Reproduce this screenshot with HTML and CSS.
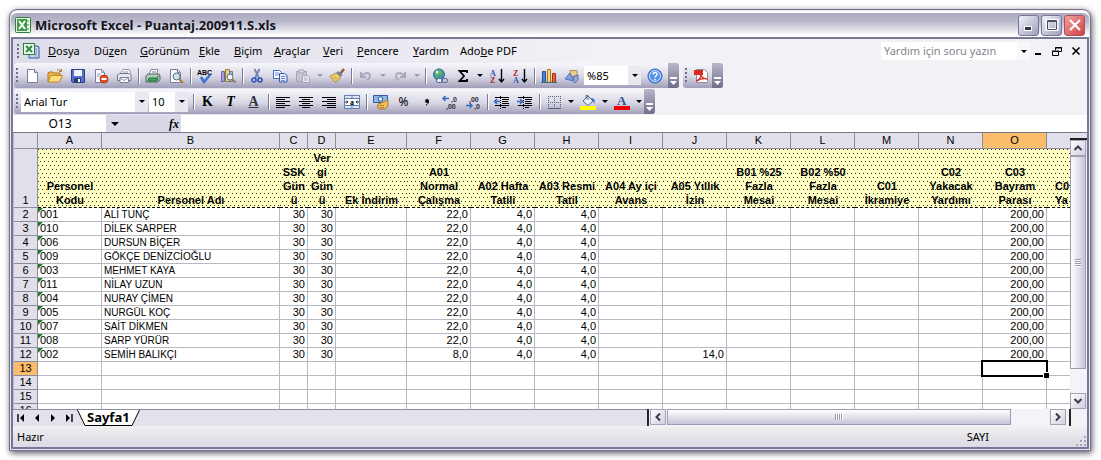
FILE: index.html
```html
<!DOCTYPE html>
<html lang="tr">
<head>
<meta charset="utf-8">
<title>Microsoft Excel - Puantaj.200911.S.xls</title>
<link rel="stylesheet" href="styles.css">
</head>
<body>
<main class="window">
  <header class="titlebar">
    <svg class="app-icon" viewBox="0 0 16 16"><rect x=".5" y=".5" width="15" height="15" rx="1" fill="#e8f3e4" stroke="#2f7d3a"/><rect x="2" y="2" width="10" height="12" fill="#3d9a48"/><path d="M4 4l6 8M10 4l-6 8" stroke="#fff" stroke-width="2"/><path d="M13 3v2M13 7v2M13 11v2" stroke="#3d9a48"/></svg>
    <h1>Microsoft Excel - Puantaj.200911.S.xls</h1>
    <div class="win-buttons">
      <button class="win-btn" aria-label="Simge durumuna küçült"><svg viewBox="0 0 16 16"><path d="M3 11.500h8" stroke="#fff" stroke-width="5"/><path d="M4 11.500h6" stroke="#333652" stroke-width="3"/></svg></button>
      <button class="win-btn" aria-label="Ekranı kapla"><svg viewBox="0 0 16 16"><path d="M3 3.500h10v9H3z" fill="none" stroke="#fff" stroke-width="3"/><path d="M3.500 3.500h9v9h-9zM3 4.500h10" fill="none" stroke="#4b4c68"/></svg></button>
      <button class="win-btn close" aria-label="Kapat"><svg viewBox="0 0 16 16"><path d="M3 3l10 10M13 3L3 13" stroke="#fff" stroke-width="2.200"/></svg></button>
    </div>
  </header>

  <div class="client">
    <nav class="menubar">
      <span class="grip"></span>
      <svg class="book-icon" viewBox="0 0 18 18"><path d="M7 4h9l1 1v11H7z" fill="#c5d5f2" stroke="#33569e"/><path d="M14 6v9" stroke="#7894cc"/><rect x="1.500" y="1.500" width="11" height="11" fill="#eef7eb" stroke="#2f7d3a"/><path d="M4 4l6 6M10 4l-6 6" stroke="#2f8a3d" stroke-width="2"/></svg>
      <div class="menus">
        <button><u>D</u>osya</button><button>Dü<u>z</u>en</button><button><u>G</u>örünüm</button><button><u>E</u>kle</button><button><u>B</u>içim</button><button><u>A</u>raçlar</button><button><u>V</u>eri</button><button><u>P</u>encere</button><button><u>Y</u>ardım</button><button>Ado<u>b</u>e PDF</button>
      </div>
      <div class="combo help-box"><input type="text" placeholder="Yardım için soru yazın" aria-label="Yardım için soru yazın"><i class="arrow"></i></div>
      <div class="doc-buttons">
        <button aria-label="Pencereyi küçült"><svg viewBox="0 0 10 10"><path d="M2 8h6" stroke="#000" stroke-width="2"/></svg></button>
        <button aria-label="Pencereyi geri yükle"><svg viewBox="0 0 10 10"><path d="M3.500 4V1.500h6v4H7M3 2h7M.5 5.500h6v4h-6zM0 5h7" fill="none" stroke="#000"/></svg></button>
        <button aria-label="Pencereyi kapat"><svg viewBox="0 0 10 10"><path d="M1.500 1.500l7 7M8.500 1.500l-7 7" stroke="#000" stroke-width="1.600"/></svg></button>
      </div>
    </nav>

    <div class="toolrow">
      <div class="toolbar">
        <span class="grip"></span>
        <button class="tool" aria-label="Yeni"><svg viewBox="0 0 16 16"><path d="M3.500 1.500h7l3 3v10h-10z" fill="#fff" stroke="#76809c"/><path d="M10.500 1.500v3h3" fill="#cbd6ee" stroke="#76809c"/></svg></button>
        <button class="tool" aria-label="Aç"><svg viewBox="0 0 16 16"><path d="M1 14V5l1-1h4l1 1h6v3" fill="#e8b44a" stroke="#b1741d"/><path d="M1 14l3-6.500h11.500L12.500 14z" fill="#ffdf7d" stroke="#c28627"/><path d="M10 3c1-2 3-2 4 0M14.500 1v2.500H12" fill="none" stroke="#b1741d"/></svg></button>
        <button class="tool" aria-label="Kaydet"><svg viewBox="0 0 16 16"><path d="M1.500 1.500h13v13h-12l-1-1z" fill="#5570c8" stroke="#2d3f8c"/><path d="M4 2h8v6H4z" fill="#f1f4fc"/><path d="M4 10h7v4H4z" fill="#2c3b7d"/><path d="M8 11h2v3H8z" fill="#fff"/></svg></button>
        <button class="tool" aria-label="İzin"><svg viewBox="0 0 16 16"><path d="M2.500 1.500h6l3 3v10h-9z" fill="#fff" stroke="#76809c"/><path d="M8.500 1.500v3h3M4 6h4M4 8h3" fill="none" stroke="#8d9bc0"/><circle cx="11" cy="11" r="4" fill="#e4502c" stroke="#b52f16"/><path d="M8.500 11h5" stroke="#fff" stroke-width="2"/></svg></button>
        <button class="tool" aria-label="E-posta"><svg viewBox="0 0 16 16"><path d="M4 6l3-4.500h6l2 4" fill="#fff" stroke="#8b93a8"/><path d="M1.500 7l2-1.500h10L15 7v5.500H1.500z" fill="#e8e9f0" stroke="#6e7488"/><path d="M4 9.500h8.500v5H4z" fill="#fff" stroke="#7b8195"/><path d="M4 10l4 2.500 4-2.500M7 4h5" fill="none" stroke="#8b93a8"/></svg></button>
        <span class="sep"></span>
        <button class="tool" aria-label="Yazdır"><svg viewBox="0 0 16 16"><path d="M4 7l2-5.500h7L11.500 7" fill="#fff" stroke="#7a869b"/><path d="M1 8l2-2h11l1 2v4l-2 2H1z" fill="#b6c7bd" stroke="#52665e"/><path d="M3 13l1-3h9l-1 3z" fill="#3fa557" stroke="#23743a"/><path d="M7 4h4M12 8.500h2" stroke="#657386"/></svg></button>
        <button class="tool" aria-label="Baskı önizleme"><svg viewBox="0 0 16 16"><path d="M2.500 1.500h7l3 3v10h-10z" fill="#fff" stroke="#76809c"/><path d="M9.500 1.500v3h3" fill="none" stroke="#76809c"/><circle cx="8.500" cy="8.500" r="3.500" fill="#cfe4ef" stroke="#596b85"/><path d="M11 11l4 4" stroke="#ad7635" stroke-width="2"/></svg></button>
        <span class="sep"></span>
        <button class="tool" aria-label="Yazım denetimi"><svg viewBox="0 0 16 16"><text x="0" y="7" class="abc">ABC</text><path d="M4 9l3 5 6-7" fill="none" stroke="#3f74cc" stroke-width="2.600"/></svg></button>
        <button class="tool" aria-label="Araştır"><svg viewBox="0 0 16 16"><path d="M1.500 3.500h3v10h-3z" fill="#a79be0" stroke="#6d60b5"/><path d="M5.500 1.500h4v12h-4z" fill="#e7d46e" stroke="#9a8130"/><path d="M9.500 3.500h3v10h-3z" fill="#9fb9e6" stroke="#5d76ad"/><circle cx="10" cy="9" r="3" fill="#eaf2f9" stroke="#6d7280"/><path d="M12 11l3.500 3.500" stroke="#a5793b" stroke-width="2"/></svg></button>
        <span class="sep"></span>
        <button class="tool" aria-label="Kes"><svg viewBox="0 0 16 16"><path d="M5.500 1l4.500 9M10.500 1L6 10" stroke="#6d83b5" stroke-width="1.800"/><circle cx="5" cy="12" r="2" fill="none" stroke="#2b56b0" stroke-width="1.600"/><circle cx="11" cy="12" r="2" fill="none" stroke="#2b56b0" stroke-width="1.600"/></svg></button>
        <button class="tool" aria-label="Kopyala"><svg viewBox="0 0 16 16"><path d="M1.500 2.500h6l2 2v6h-8z" fill="#fff" stroke="#4769b8"/><path d="M3 5h4M3 7h4" stroke="#6b8cd0"/><path d="M7.500 5.500h5l2.500 2v6.500H7.500z" fill="#e3ecfd" stroke="#3559ae"/><path d="M9 8.500h4M9 10.500h4M9 12.500h4" stroke="#6b8cd0"/></svg></button>
        <button class="tool" aria-label="Yapıştır" disabled><svg viewBox="0 0 16 16"><path d="M1.500 3.500h10v10h-10z" fill="#c5c5d2" stroke="#a3a3b5"/><path d="M4 2h5v3H4z" fill="#dadae4" stroke="#a3a3b5"/><path d="M7.500 7.500h5l2 2v5h-7z" fill="#ececf2" stroke="#a3a3b5"/><path d="M9 10h3M9 12h4" stroke="#a3a3b5"/></svg></button>
        <button class="drop off" aria-label="Yapıştırma seçenekleri" disabled></button>
        <button class="tool" aria-label="Biçim boyacısı"><svg viewBox="0 0 16 16"><path d="M15 1l-4 5" stroke="#8a6332" stroke-width="2.500"/><path d="M8 4l4.500 4" stroke="#7482a8" stroke-width="3"/><path d="M7 5L1 8.500l5 5.500c3-1 5-3 5.500-5z" fill="#f5d878" stroke="#b58c33"/><path d="M3 9l5 3M5 8l5 3" stroke="#c9a145"/></svg></button>
        <span class="sep"></span>
        <button class="tool" aria-label="Geri al" disabled><svg viewBox="0 0 16 16"><path d="M3 4v5h5M3 9c3-5 9-5 9-1 0 2-1 3-3 4" fill="none" stroke="#a9a9bc" stroke-width="2"/></svg></button>
        <button class="drop off" aria-label="Geri al listesi" disabled></button>
        <button class="tool" aria-label="Yinele" disabled><svg viewBox="0 0 16 16"><path d="M13 4v5H8M13 9C10 4 4 4 4 8c0 2 1 3 3 4" fill="none" stroke="#a9a9bc" stroke-width="2"/></svg></button>
        <button class="drop off" aria-label="Yinele listesi" disabled></button>
        <span class="sep"></span>
        <button class="tool" aria-label="Köprü ekle"><svg viewBox="0 0 16 16"><circle cx="7" cy="6.500" r="5.500" fill="#4695a0" stroke="#2d6c8b"/><path d="M3 5c2-4 4-2 6-3l1 4-4 1-1 3z" fill="#64ba65"/><circle cx="5" cy="4" r="1.500" fill="#d2f0dc"/><rect x="4.500" y="10.500" width="6" height="4" rx="2" fill="#e9effa" stroke="#4d628e"/><rect x="9.500" y="10.500" width="6" height="4" rx="2" fill="none" stroke="#4d628e"/></svg></button>
        <button class="tool" aria-label="Otomatik toplam"><svg viewBox="0 0 16 16"><path d="M12 5V3H4.500L9 8l-4.500 5H12v-2" fill="none" stroke="#000" stroke-width="1.800"/></svg></button>
        <button class="drop" aria-label="Toplam seçenekleri"></button>
        <button class="tool" aria-label="Artan sıralama"><svg viewBox="0 0 16 16"><text x="1" y="8" class="sort blue">A</text><text x="1" y="15" class="sort red">Z</text><path d="M12.500 1v12M10 11l2.500 3 2.500-3" fill="none" stroke="#000" stroke-width="1.400"/></svg></button>
        <button class="tool" aria-label="Azalan sıralama"><svg viewBox="0 0 16 16"><text x="1" y="8" class="sort red">Z</text><text x="1" y="15" class="sort blue">A</text><path d="M12.500 1v12M10 11l2.500 3 2.500-3" fill="none" stroke="#000" stroke-width="1.400"/></svg></button>
        <span class="sep"></span>
        <button class="tool" aria-label="Grafik sihirbazı"><svg viewBox="0 0 16 16"><path d="M1.500 3.500h3v11h-3z" fill="#4a7edb" stroke="#25509f"/><path d="M6.500 1.500h3v13h-3z" fill="#ffd75b" stroke="#a47a1d"/><path d="M11.500 5.500h3v9h-3z" fill="#e8613d" stroke="#a33419"/><path d="M0 14.500h16" stroke="#566"/></svg></button>
        <button class="tool" aria-label="Çizim"><svg viewBox="0 0 16 16"><path d="M6 2.500h7v6H6z" fill="#edcf83" stroke="#ae914d"/><path d="M1 11l5-6 4 8z" fill="#7f9de0" stroke="#5773b5"/><path d="M10 8l4-1v5l-3 3-2-2z" fill="#99a6d8" stroke="#606ca5"/></svg></button>
        <div class="combo zoom"><select aria-label="Yakınlaştır"><option>%85</option></select><i class="arrow"></i></div>
        <button class="tool help" aria-label="Yardım"><svg viewBox="0 0 16 16"><circle cx="8" cy="8" r="7" fill="#4e8de8" stroke="#2c63be"/><circle cx="8" cy="8" r="5.500" fill="none" stroke="#dceaff"/><path d="M6 6.500c0-3 4.200-2.500 4 0-.2 1.300-2 1.500-2 3M8 10.800v1.500" fill="none" stroke="#fff" stroke-width="1.500"/></svg></button>
        <button class="more" aria-label="Araç çubuğu seçenekleri"><svg viewBox="0 0 7 8"><path d="M0 1h7" stroke="#fff" stroke-width="2"/><path d="M0 4h7L3.500 8z" fill="#fff"/></svg></button>
      </div>
      <div class="toolbar">
        <span class="grip"></span>
        <button class="tool" aria-label="Adobe PDF'e dönüştür"><svg viewBox="0 0 16 16"><path d="M3.500 1.500h8l3 3v10h-11z" fill="#fff" stroke="#8f8f98"/><path d="M1 2h9v5H1z" fill="#dc2822"/><path d="M3 13c4-1 5-5 4.500-8C8 9 10 11 14 11c-3-1-7 0-10 2" fill="none" stroke="#d92a25" stroke-width="1.300"/></svg></button>
        <button class="more" aria-label="PDF araç çubuğu seçenekleri"><svg viewBox="0 0 7 8"><path d="M0 1h7" stroke="#fff" stroke-width="2"/><path d="M0 4h7L3.500 8z" fill="#fff"/></svg></button>
      </div>
    </div>

    <div class="toolrow">
      <div class="toolbar">
        <span class="grip"></span>
        <div class="combo font"><select aria-label="Yazı tipi"><option>Arial Tur</option></select><i class="arrow"></i></div>
        <div class="combo size"><select aria-label="Yazı tipi boyutu"><option>10</option></select><i class="arrow"></i></div>
        <span class="sep"></span>
        <button class="tool letter"><b>K</b></button>
        <button class="tool letter"><em>T</em></button>
        <button class="tool letter"><u>A</u></button>
        <span class="sep"></span>
        <button class="tool" aria-label="Sola hizala"><svg viewBox="0 0 16 16"><path d="M1 3.500h14M1 5.500h9M1 7.500h14M1 9.500h9M1 11.500h14M1 13.500h9" stroke="#000"/></svg></button>
        <button class="tool" aria-label="Ortala"><svg viewBox="0 0 16 16"><path d="M1 3.500h14M4 5.500h8M1 7.500h14M4 9.500h8M1 11.500h14M4 13.500h8" stroke="#000"/></svg></button>
        <button class="tool" aria-label="Sağa hizala"><svg viewBox="0 0 16 16"><path d="M1 3.500h14M6 5.500h9M1 7.500h14M6 9.500h9M1 11.500h14M6 13.500h9" stroke="#000"/></svg></button>
        <button class="tool" aria-label="Birleştir ve ortala"><svg viewBox="0 0 16 16"><path d="M.5 1.500h15v13H.5zM.5 4.500h15M.5 11.500h15M8 1v3.500M8 11.500v3" fill="#d9e5f8" stroke="#657fae"/><path d="M1 5h14v6H1z" fill="#fff"/><path d="M1 8h3M2.500 6.500L4 8 2.500 9.500M15 8h-3M13.500 6.500L12 8l1.500 1.500" fill="none" stroke="#222c48"/><text x="6" y="11" class="merge">a</text></svg></button>
        <span class="sep"></span>
        <button class="tool" aria-label="Para birimi"><svg viewBox="0 0 16 16"><path d="M.5 1.500h14v7H.5z" fill="#8eb8ec" stroke="#345b9b"/><circle cx="7.500" cy="5" r="2.300" fill="#dceafd" stroke="#345b9b"/><path d="M5 10l5-2 5-2v6l-3 3H6L4.500 13z" fill="#eebf62" stroke="#a7742d"/><path d="M6 11.500h5M7 13.500h4" stroke="#b58338"/></svg></button>
        <button class="tool percent">%</button>
        <button class="tool" aria-label="Binlik ayırıcı"><svg viewBox="0 0 16 16"><circle cx="8" cy="7" r="1.900"/><path d="M9.500 7c.3 2-1 3.500-2.500 4" fill="none" stroke="#000"/></svg></button>
        <button class="tool" aria-label="Ondalık artır"><svg viewBox="0 0 16 16"><path d="M1 4.500h6M3.500 2L1 4.500 3.500 7" fill="none" stroke="#3467bd" stroke-width="1.400"/><text x="9" y="8" class="dec">,0</text><text x="4" y="15" class="dec">,00</text></svg></button>
        <button class="tool" aria-label="Ondalık azalt"><svg viewBox="0 0 16 16"><path d="M1 11.500h6M4.500 9L7 11.500 4.500 14" fill="none" stroke="#3467bd" stroke-width="1.400"/><text x="4" y="8" class="dec">,00</text><text x="9" y="15" class="dec">,0</text></svg></button>
        <span class="sep"></span>
        <button class="tool" aria-label="Girintiyi azalt"><svg viewBox="0 0 16 16"><path d="M1 3.500h14M8 5.500h7M8 7.500h6M8 9.500h7M1 11.500h14M8 13.500h4" stroke="#000"/><path d="M0 7.500h6M3 5L.5 7.500 3 10" fill="none" stroke="#3467bd" stroke-width="1.500"/><path d="M6.500 2v13" stroke="#000" stroke-dasharray="1 1"/></svg></button>
        <button class="tool" aria-label="Girintiyi artır"><svg viewBox="0 0 16 16"><path d="M1 3.500h14M8 5.500h7M8 7.500h6M8 9.500h7M1 11.500h14M8 13.500h4" stroke="#000"/><path d="M0 7.500h6M3 5l2.500 2.500L3 10" fill="none" stroke="#3467bd" stroke-width="1.500"/><path d="M6.500 2v13" stroke="#000" stroke-dasharray="1 1"/></svg></button>
        <span class="sep"></span>
        <button class="tool" aria-label="Kenarlıklar"><svg viewBox="0 0 16 16"><path d="M2 2.500h13M2 8.500h13M2.500 2v12M8.500 2v12M14.500 2v12" fill="none" stroke="#555d78" stroke-dasharray="1 1"/><path d="M2 14.500h13" stroke="#555d78"/></svg></button>
        <button class="drop" aria-label="Kenarlık seçenekleri"></button>
        <button class="tool" aria-label="Dolgu rengi"><svg viewBox="0 0 16 16"><path d="M3 7l5-5 5 5-5 4.500z" fill="#edf3fd" stroke="#4d6699"/><path d="M6 5V1.500h2V6" fill="none" stroke="#60708f"/><path d="M11 4c4 0 4 3 3.500 6-1-2-1-3-2.500-3z" fill="#3f74cc"/><path d="M0 12h16v4H0z" fill="#ff0"/></svg></button>
        <button class="drop" aria-label="Dolgu renkleri"></button>
        <button class="tool" aria-label="Yazı tipi rengi"><svg viewBox="0 0 16 16"><text x="3" y="11" class="fontcolor">A</text><path d="M0 12h16v4H0z" fill="#f00000"/></svg></button>
        <button class="drop" aria-label="Yazı tipi renkleri"></button>
        <button class="more" aria-label="Biçimlendirme seçenekleri"><svg viewBox="0 0 7 8"><path d="M0 1h7" stroke="#fff" stroke-width="2"/><path d="M0 4h7L3.500 8z" fill="#fff"/></svg></button>
      </div>
    </div>

    <div class="formula-bar">
      <div class="combo name-box"><input type="text" value="O13" aria-label="Ad kutusu"><i class="arrow"></i></div>
      <button class="fx">fx</button>
      <input class="formula" type="text" aria-label="Formül çubuğu">
    </div>

    <div class="sheet">
      <div class="cells">
        <table>
          <colgroup><col class="w-head"><col class="w-std"><col class="w-name"><col class="w-day"><col class="w-day"><col class="w-extra"><col class="w-std" span="11"></colgroup>
          <thead>
            <tr><th></th><th>A</th><th>B</th><th>C</th><th>D</th><th>E</th><th>F</th><th>G</th><th>H</th><th>I</th><th>J</th><th>K</th><th>L</th><th>M</th><th>N</th><th class="active">O</th><th></th></tr>
          </thead>
          <tbody>
            <tr class="titles"><th>1</th><td>Personel<br>Kodu</td><td>Personel Adı</td><td>SSK<br>Gün<br>ü</td><td>Ver<br>gi<br>Gün<br>ü</td><td>Ek İndirim</td><td>A01<br>Normal<br>Çalışma</td><td>A02 Hafta<br>Tatili</td><td>A03 Resmi<br>Tatil</td><td>A04 Ay içi<br>Avans</td><td>A05 Yıllık<br>İzin</td><td>B01 %25<br>Fazla<br>Mesai</td><td>B02 %50<br>Fazla<br>Mesai</td><td>C01<br>İkramiye</td><td>C02<br>Yakacak<br>Yardımı</td><td>C03<br>Bayram<br>Parası</td><td class="cut">C0<br>Ya</td></tr>
            <tr><th>2</th><td class="code">001</td><td class="name">ALİ TUNÇ</td><td>30</td><td>30</td><td></td><td>22,0</td><td>4,0</td><td>4,0</td><td></td><td></td><td></td><td></td><td></td><td></td><td>200,00</td><td></td></tr>
            <tr><th>3</th><td class="code">010</td><td class="name">DİLEK SARPER</td><td>30</td><td>30</td><td></td><td>22,0</td><td>4,0</td><td>4,0</td><td></td><td></td><td></td><td></td><td></td><td></td><td>200,00</td><td></td></tr>
            <tr><th>4</th><td class="code">006</td><td class="name">DURSUN BİÇER</td><td>30</td><td>30</td><td></td><td>22,0</td><td>4,0</td><td>4,0</td><td></td><td></td><td></td><td></td><td></td><td></td><td>200,00</td><td></td></tr>
            <tr><th>5</th><td class="code">009</td><td class="name">GÖKÇE DENİZCİOĞLU</td><td>30</td><td>30</td><td></td><td>22,0</td><td>4,0</td><td>4,0</td><td></td><td></td><td></td><td></td><td></td><td></td><td>200,00</td><td></td></tr>
            <tr><th>6</th><td class="code">003</td><td class="name">MEHMET KAYA</td><td>30</td><td>30</td><td></td><td>22,0</td><td>4,0</td><td>4,0</td><td></td><td></td><td></td><td></td><td></td><td></td><td>200,00</td><td></td></tr>
            <tr><th>7</th><td class="code">011</td><td class="name">NİLAY UZUN</td><td>30</td><td>30</td><td></td><td>22,0</td><td>4,0</td><td>4,0</td><td></td><td></td><td></td><td></td><td></td><td></td><td>200,00</td><td></td></tr>
            <tr><th>8</th><td class="code">004</td><td class="name">NURAY ÇİMEN</td><td>30</td><td>30</td><td></td><td>22,0</td><td>4,0</td><td>4,0</td><td></td><td></td><td></td><td></td><td></td><td></td><td>200,00</td><td></td></tr>
            <tr><th>9</th><td class="code">005</td><td class="name">NURGÜL KOÇ</td><td>30</td><td>30</td><td></td><td>22,0</td><td>4,0</td><td>4,0</td><td></td><td></td><td></td><td></td><td></td><td></td><td>200,00</td><td></td></tr>
            <tr><th>10</th><td class="code">007</td><td class="name">SAİT DİKMEN</td><td>30</td><td>30</td><td></td><td>22,0</td><td>4,0</td><td>4,0</td><td></td><td></td><td></td><td></td><td></td><td></td><td>200,00</td><td></td></tr>
            <tr><th>11</th><td class="code">008</td><td class="name">SARP YÜRÜR</td><td>30</td><td>30</td><td></td><td>22,0</td><td>4,0</td><td>4,0</td><td></td><td></td><td></td><td></td><td></td><td></td><td>200,00</td><td></td></tr>
            <tr><th>12</th><td class="code">002</td><td class="name">SEMİH BALIKÇI</td><td>30</td><td>30</td><td></td><td>8,0</td><td>4,0</td><td>4,0</td><td></td><td>14,0</td><td></td><td></td><td></td><td></td><td>200,00</td><td></td></tr>
            <tr><th class="active">13</th><td></td><td></td><td></td><td></td><td></td><td></td><td></td><td></td><td></td><td></td><td></td><td></td><td></td><td></td><td class="selected"></td><td></td></tr>
            <tr><th>14</th><td></td><td></td><td></td><td></td><td></td><td></td><td></td><td></td><td></td><td></td><td></td><td></td><td></td><td></td><td></td><td></td></tr>
            <tr><th>15</th><td></td><td></td><td></td><td></td><td></td><td></td><td></td><td></td><td></td><td></td><td></td><td></td><td></td><td></td><td></td><td></td></tr>
            <tr><th>16</th><td></td><td></td><td></td><td></td><td></td><td></td><td></td><td></td><td></td><td></td><td></td><td></td><td></td><td></td><td></td><td></td></tr>
          </tbody>
        </table>
      </div>
      <div class="vscroll">
        <span class="vsplit"></span>
        <button class="sbtn" aria-label="Yukarı kaydır"><svg viewBox="0 0 10 10"><path d="M1.500 7L5 3.500 8.500 7" fill="none" stroke="#3c3c50" stroke-width="2"/></svg></button>
        <div class="vtrack"><div class="vthumb"><i></i></div></div>
        <button class="sbtn" aria-label="Aşağı kaydır"><svg viewBox="0 0 10 10"><path d="M1.500 3L5 6.500 8.500 3" fill="none" stroke="#3c3c50" stroke-width="2"/></svg></button>
      </div>
    </div>

    <div class="bottom">
      <div class="tabs">
        <button class="nav" aria-label="İlk sayfa"><svg viewBox="0 0 8 8"><path d="M1 0v8" stroke="#000" stroke-width="1.400"/><path d="M7 0v8L3 4z"/></svg></button>
        <button class="nav" aria-label="Önceki sayfa"><svg viewBox="0 0 8 8"><path d="M6 0v8L2 4z"/></svg></button>
        <button class="nav" aria-label="Sonraki sayfa"><svg viewBox="0 0 8 8"><path d="M2 0v8l4-4z"/></svg></button>
        <button class="nav" aria-label="Son sayfa"><svg viewBox="0 0 8 8"><path d="M7 0v8" stroke="#000" stroke-width="1.400"/><path d="M1 0v8l4-4z"/></svg></button>
        <button class="tab"><svg viewBox="0 0 8 16"><path d="M0 0h8v16z" fill="#fff"/><path d="M.5 0l7.500 15.500" fill="none" stroke="#000"/></svg><span>Sayfa1</span><svg viewBox="0 0 8 16"><path d="M0 0h8L0 16z" fill="#fff"/><path d="M7.500 0L0 15.500" fill="none" stroke="#000"/></svg></button>
      </div>
      <div class="hscroll">
        <button class="sbtn" aria-label="Sola kaydır"><svg viewBox="0 0 10 10"><path d="M7 1.500L3.500 5 7 8.500" fill="none" stroke="#3c3c50" stroke-width="2"/></svg></button>
        <div class="htrack"><div class="hthumb"><i></i></div></div>
        <button class="sbtn" aria-label="Sağa kaydır"><svg viewBox="0 0 10 10"><path d="M3 1.500L6.500 5 3 8.500" fill="none" stroke="#3c3c50" stroke-width="2"/></svg></button>
      </div>
      <span class="corner"></span>
    </div>

    <footer class="status">
      <span>Hazır</span><span class="num">SAYI</span>
      <svg class="resize" viewBox="0 0 12 12"><path d="M9 2h2M9 6h2M9 10h2M5 6h2M5 10h2M1 10h2" stroke="#a9a8b8" stroke-width="2"/></svg>
    </footer>
  </div>
</main>
</body>
</html>
```

FILE: styles.css
```css
* { box-sizing: border-box; }
body {
  margin: 0;
  padding: 9px 10px 9px 9px;
  height: 100vh;
  overflow: hidden;
  background: #fff;
  color: #000;
  font: 11px/14px "Noto Sans", "Open Sans", sans-serif;
}
button, input, select {
  margin: 0;
  padding: 0;
  border: 0;
  background: none;
  color: inherit;
  font: inherit;
  appearance: none;
  outline: 0;
}
svg { display: block; }

.window {
  display: flex;
  flex-direction: column;
  height: 100%;
  border: 1px solid #73728a;
  border-radius: 8px 8px 0 0;
  padding: 1px;
  background: #e9e8f1;
  box-shadow: 1px 2px 6px #555563;
}

/* Title bar */
.titlebar {
  display: flex;
  align-items: center;
  height: 27px;
  flex: none;
  padding: 0 4px;
  border-top: 2px solid #fff;
  border-bottom: 1px solid #7f7d90;
  border-radius: 7px 7px 0 0;
  background: linear-gradient(#a9a8bf, #b9b8cb 35%, #e2e1ea 70%, #fff 92%);
}
.app-icon { width: 16px; height: 16px; }
.titlebar h1 {
  flex: 1;
  margin: 0 0 0 4px;
  font: 700 13px/20px "Open Sans", sans-serif;
  color: #16161e;
  white-space: nowrap;
}
.win-buttons { display: flex; gap: 2px; }
.win-btn {
  display: grid;
  place-items: center;
  width: 21px;
  height: 21px;
  border: 1px solid #77779a;
  border-radius: 3px;
  background: linear-gradient(135deg, #f3f3fa, #9d9dbb);
}
.win-btn svg { width: 16px; height: 16px; }
.win-btn.close { border-color: #a8505c; background: linear-gradient(135deg, #f0a29a, #d04048); }

.client {
  display: flex;
  flex-direction: column;
  flex: 1;
  min-height: 0;
  border: solid #77759a;
  border-width: 1px 2px 2px;
  background: linear-gradient(90deg, #dddce9, #f2f1f6 55%);
}

/* Menu and tool bars */
.grip {
  flex: none;
  width: 2px;
  height: 15px;
  margin: 0 3px;
  background: repeating-linear-gradient(#6f6d90 0 2px, transparent 2px 4px);
}
.menubar { display: flex; align-items: center; flex: none; height: 24px; }
.menubar .grip { margin-left: 4px; }
.book-icon { width: 18px; height: 18px; }
.menus {
  display: grid;
  grid-template-columns: 46px 46px 59px 35px 40px 49px 34px 56px 47px 60px;
  flex: 1;
  margin-left: 8px;
}
.menus button { text-align: left; white-space: nowrap; }

.combo { display: grid; flex: none; background: #fff; }
.combo > * { grid-area: 1 / 1; min-width: 0; }
.combo .arrow {
  justify-self: end;
  pointer-events: none;
  width: 13px;
  background: #e9e8f0;
}
.arrow, .drop, .more { display: grid; place-items: center; }
.arrow::before, .drop::before {
  content: "";
  border: solid transparent;
  border-width: 3px 3px 0;
  border-top-color: #000;
}
.help-box { width: 149px; height: 18px; }
.help-box input { padding-left: 3px; }
.help-box input::placeholder { color: #85858c; opacity: 1; }
.help-box .arrow { background: #f8f8fb; }
.doc-buttons { display: flex; gap: 9px; margin: 0 6px 0 3px; }
.doc-buttons svg { width: 10px; height: 10px; }

.toolrow { display: flex; gap: 4px; flex: none; height: 26px; padding-left: 1px; }
.toolbar {
  display: flex;
  align-items: center;
  height: 25px;
  border-radius: 3px;
  overflow: hidden;
  background: linear-gradient(#f7f7fb, #d8d7e5 55%, #a09eb8);
}
.toolbar .grip { margin: 0 2px; }
.tool { display: grid; place-items: center; flex: none; width: 23px; height: 22px; }
.tool svg { width: 16px; height: 16px; overflow: visible; }
.tool.help { margin: 0 2px; }
.drop { flex: none; width: 11px; height: 22px; }
.drop.off::before { border-top-color: #9c9bb0; }
.sep { flex: none; width: 1px; height: 16px; margin: 0 2px 0 3px; background: #7c7a99; box-shadow: 1px 0 #fff; }
.more {
  align-self: stretch;
  align-content: end;
  flex: none;
  width: 11px;
  padding-bottom: 3px;
  background: linear-gradient(#b9b7cb, #6f6d88);
}
.more svg { width: 7px; height: 8px; }
.combo.font { width: 127px; height: 20px; margin-left: 1px; }
.combo.size { width: 39px; height: 20px; margin: 0 2px 0 1px; }
.combo.zoom { width: 57px; height: 19px; margin-left: 1px; }
.combo select { padding-left: 3px; }
.letter { font: bold 14px/20px "Liberation Serif", serif; }
.letter u { color: #35353f; }
.percent { font-size: 12px; }
.abc { font: bold 7px "Liberation Sans", sans-serif; }
.sort { font: bold 8px "Liberation Serif", serif; }
.blue { fill: #2d55b0; }
.red { fill: #b32a2a; }
.merge { font: bold 8px "Liberation Serif", serif; }
.dec { font: bold 7px "Liberation Sans", sans-serif; fill: #2a2a33; }
.fontcolor { font: bold 13px "Liberation Serif", serif; fill: #35508f; }

/* Formula bar */
.formula-bar { display: flex; flex: none; height: 17px; background: #d9d8e6; }
.name-box { width: 111px; }
.name-box input { padding-right: 17px; text-align: center; font-size: 12px; line-height: 17px; }
.name-box .arrow { width: 18px; background: #d9d8e6; }
.name-box .arrow::before { border-width: 4px 4px 0; }
.fx { width: 57px; padding-left: 45px; text-align: left; font: italic bold 12px/16px "Liberation Serif", serif; }
.formula { flex: 1; min-width: 0; background: #fff; }

/* Worksheet */
.sheet { display: flex; flex: 1; min-height: 0; background: #e3e2ec; border-top: 1px solid #77768a; }
.cells { flex: 1; min-width: 0; overflow: hidden; background: #fff; border-left: 1px solid #b9b8c8; }
table {
  table-layout: fixed;
  width: 1069px;
  border-spacing: 0;
  font: 11px/13px "Liberation Sans", Arial, sans-serif;
}
.w-head { width: 24px; }
.w-std { width: 64px; }
.w-name { width: 178px; }
.w-day { width: 28px; }
.w-extra { width: 71px; }
td, th {
  height: 14px;
  padding: 0 2px;
  border: solid #b8b8c0;
  border-width: 0 1px 1px 0;
  text-align: right;
  white-space: nowrap;
}
th {
  padding: 0;
  border-color: #8d8c9c;
  background: #e0dfea;
  font-weight: normal;
  text-align: center;
}
thead th { height: 16px; }
th.active { background: #fbbd6c; }
.titles th { vertical-align: bottom; }
.titles td {
  height: 59px;
  padding: 0;
  border-right: 0;
  border-bottom: 1px dashed #000;
  vertical-align: bottom;
  text-align: center;
  font-weight: bold;
  line-height: 14px;
  background-color: #ffffc4;
  background-image:
    conic-gradient(at 1px 1px, transparent 75%, #33332a 0),
    conic-gradient(at 1px 1px, transparent 75%, #33332a 0);
  background-size: 4px 8px;
  background-position: 0 0, 2px 4px;
}
.titles td.cut { padding-left: 8px; text-align: left; }
td.name, td.code { text-align: left; }
td.name { font-size: 10px; }
td.code { background: linear-gradient(135deg, #1f7a2b 3px, transparent 4px); }
td.selected { position: relative; }
td.selected::before {
  content: "";
  position: absolute;
  inset: -2px;
  border: 2px solid #000;
}
td.selected::after {
  content: "";
  position: absolute;
  right: -3px;
  bottom: -3px;
  width: 5px;
  height: 5px;
  border: solid #fff;
  border-width: 1px 0 0 1px;
  background: #000;
}

/* Scroll bars */
.vscroll { display: flex; flex-direction: column; flex: none; width: 17px; }
.vsplit { height: 7px; border-bottom: 2px solid #222; }
.sbtn {
  display: grid;
  place-items: center;
  flex: none;
  width: 16px;
  height: 16px;
  border: 1px solid #a4a3b6;
  background: linear-gradient(135deg, #fff, #d0cfde);
}
.sbtn svg { width: 10px; height: 10px; }
.vtrack { flex: 1; background: #f3f3f9; }
.vthumb, .hthumb { display: grid; place-items: center; border: 1px solid #9c9bb0; }
.vthumb { width: 16px; height: 90%; background: linear-gradient(90deg, #fff, #e3e2ee 50%, #c6c5d9); }
.vthumb i { width: 6px; height: 8px; background: repeating-linear-gradient(#9695aa 0 1px, #fff 1px 2px); }
.bottom { display: flex; flex: none; height: 17px; }
.tabs { display: flex; flex: 1; min-width: 0; border-top: 1px solid #8d8c9c; background: #e3e2ec; }
.nav { display: grid; place-items: center; width: 16px; }
.nav svg { width: 8px; height: 8px; }
.tab { display: flex; }
.tab svg { width: 8px; height: 16px; }
.tab span {
  padding: 0 2px;
  border-bottom: 1px solid #000;
  background: #fff;
  font: bold 13px/15px "Noto Sans", sans-serif;
}
.hscroll { display: flex; flex: none; width: 39%; border-left: 2px solid #222; padding-left: 1px; }
.htrack { flex: 1; margin: 0 1px; background: #f3f3f9; }
.hthumb { width: 90%; height: 16px; background: linear-gradient(#fff, #e3e2ee 50%, #c6c5d9); }
.hthumb i { width: 8px; height: 6px; background: repeating-linear-gradient(90deg, #9695aa 0 1px, #fff 1px 2px); }
.corner { flex: none; width: 21px; background: linear-gradient(90deg, transparent 3px, #222 3px 5px, transparent 5px); }

/* Status bar */
.status {
  display: flex;
  align-items: center;
  flex: none;
  height: 21px;
  padding-left: 4px;
  background: linear-gradient(#f2f2f4, #e4e3e9 50%, #dcdbe6);
}
.num { margin-left: auto; margin-right: 86px; }
.resize { align-self: end; width: 12px; height: 12px; }
```
